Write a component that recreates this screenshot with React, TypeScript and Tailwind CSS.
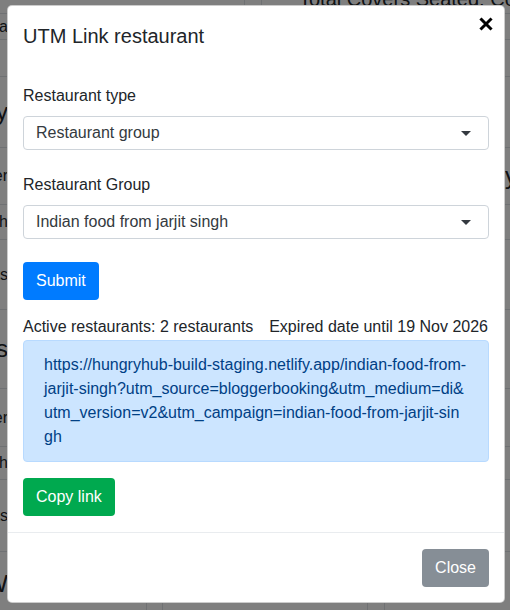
import React from "react";

function Caret() {
  return (
    <svg width="10" height="5" viewBox="0 0 10 5" className="shrink-0">
      <path d="M0 0 L10 0 L5 5 Z" fill="#343a40" />
    </svg>
  );
}

function Select({ value }: { value: string }) {
  return (
    <div className="flex h-[34px] items-center justify-between rounded-[4px] border border-[#ced4da] bg-white pl-[12px] pr-[17px] text-[16px] text-[#343a40]">
      <span>{value}</span>
      <Caret />
    </div>
  );
}

function LeftFrag({ text, big }: { text: string; big?: boolean }) {
  return (
    <div className="flex w-[8px] shrink-0 justify-end overflow-hidden">
      <span className={"whitespace-nowrap " + (big ? "text-[24px]" : "text-[16px]")}>{text}</span>
    </div>
  );
}

function Row({ h, left, big, right }: { h: number; left?: string; big?: boolean; right?: string }) {
  return (
    <div className="flex items-center justify-between border-b border-[#dee2e6]" style={{ height: h }}>
      {left ? <LeftFrag text={left} big={big} /> : <div />}
      {right ? <span className="w-[5px] overflow-hidden whitespace-nowrap text-[24px]">{right}</span> : null}
    </div>
  );
}

export default function App() {
  return (
    <div
      className="relative h-[610px] w-[510px] overflow-hidden bg-white text-[#212529]"
      style={{ fontFamily: '"Liberation Sans", Arial, sans-serif' }}
    >
      {/* background page */}
      <div className="flex flex-col">
        <div className="flex h-[14px] border-b border-[#dee2e6]">
          <div className="w-[245px] shrink-0 border-r border-[#dee2e6]" />
          <div className="w-[17px] shrink-0 border-r border-[#dee2e6]" />
          <div className="min-w-0 flex-1 overflow-hidden pl-[37px]">
            <div className="-mt-[13px] whitespace-nowrap text-[20px] leading-[24px]">Total Covers Seated: Covers</div>
          </div>
        </div>
        <Row h={26} left="Data" />
        <Row h={37} />
        <Row h={71} left="Today" big />
        <Row h={57} left="Dinner" right="y" />
        <Row h={35} left="Lunch" />
        <Row h={70} left="Guests" />
        <Row h={79} left="Covers" big />
        <Row h={58} left="Dinner" />
        <Row h={33} left="Lunch" />
        <Row h={72} left="Guests" />
        <div className="flex h-[58px]">
          <div className="flex w-[147px] shrink-0 items-end border-r border-[#dee2e6] pb-[8px]">
            <LeftFrag text="W" big />
          </div>
          <div className="w-[16px] shrink-0 border-r border-[#dee2e6]" />
          <div className="w-[205px] shrink-0 border-r border-[#dee2e6]" />
          <div className="w-[17px] shrink-0 border-r border-[#dee2e6]" />
        </div>
      </div>

      {/* backdrop */}
      <div className="absolute inset-0 bg-black/50" />

      {/* modal */}
      <div className="absolute inset-0 px-[5px] pt-[5px] pl-[7px]">
        <div className="w-[498px] rounded-[5px] border border-black/20 bg-white">
          <div className="flex items-start justify-between px-[15px] pb-[15px] pt-[15px]">
            <h5 className="text-[20px] leading-[30px]">UTM Link restaurant</h5>
            <button className="mr-[-4px] mt-[-4px]" aria-label="Close">
              <svg width="14" height="14" viewBox="0 0 14 14">
                <path d="M2.5 2.5 L11.5 11.5 M11.5 2.5 L2.5 11.5" stroke="#000" strokeWidth="3" strokeLinecap="square" />
              </svg>
            </button>
          </div>
          <div className="px-[15px] pb-[16px] pt-[18px] text-[16px] leading-[24px]">
            <div className="mb-[23px]">
              <label className="mb-[8px] block">Restaurant type</label>
              <Select value="Restaurant group" />
            </div>
            <div className="mb-[23px]">
              <label className="mb-[8px] block">Restaurant Group</label>
              <Select value="Indian food from jarjit singh" />
            </div>
            <button className="h-[38px] rounded-[4px] bg-[#007bff] px-[13px] text-[16px] text-white">Submit</button>
            <div className="mt-[15px] flex justify-between pr-[1px]">
              <span>Active restaurants: 2 restaurants</span>
              <span>Expired date until 19 Nov 2026</span>
            </div>
            <div className="mt-[1px] break-all rounded-[4px] border border-[#b8daff] bg-[#cce5ff] px-[20px] py-[12px] text-[#004085]">
              https://hungryhub-build-staging.netlify.app/indian-food-from-jarjit-singh?utm_source=bloggerbooking&amp;utm_medium=di&amp;utm_version=v2&amp;utm_campaign=indian-food-from-jarjit-singh
            </div>
            <button className="mt-[16px] h-[38px] rounded-[4px] bg-[#00a94f] px-[13px] text-[16px] text-white">Copy link</button>
          </div>
          <div className="flex justify-end border-t border-[#e9ecef] px-[15px] pb-[15px] pt-[16px]">
            <button className="h-[38px] rounded-[4px] bg-[#868e96] px-[13px] text-[16px] text-white">Close</button>
          </div>
        </div>
      </div>
    </div>
  );
}
